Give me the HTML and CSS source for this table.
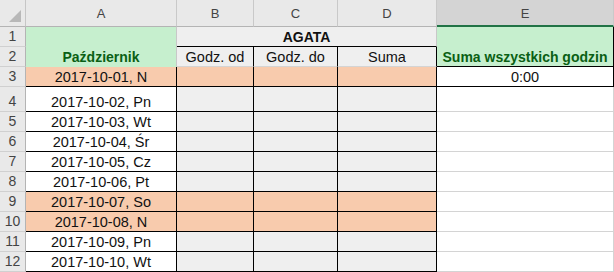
FILE: index.html
```html
<!DOCTYPE html>
<html lang="pl">
<head>
<meta charset="utf-8">
<title>Arkusz</title>
<link rel="stylesheet" href="styles.css">
</head>
<body>
<div class="sheet">
  <div class="corner"><svg class="tri" width="14" height="14" viewBox="0 0 14 14"><polygon points="13,1 13,13 1,13" fill="#b8b8b8"/></svg></div>
  <div class="ch">A</div>
  <div class="ch">B</div>
  <div class="ch">C</div>
  <div class="ch">D</div>
  <div class="ch sel">E</div>

  <div class="rh">1</div>
  <div class="c green month">Październik</div>
  <div class="c grayfill agata">AGATA</div>
  <div class="c green total">Suma wszystkich godzin</div>

  <div class="rh">2</div>
  <div class="c grayfill sub bk-r">Godz. od</div>
  <div class="c grayfill sub bk-r">Godz. do</div>
  <div class="c grayfill sub bk-r">Suma</div>

  <div class="rh">3</div>
  <div class="c bk orange">2017-10-01, N</div>
  <div class="c bk orange"></div>
  <div class="c bk orange"></div>
  <div class="c bk orange"></div>
  <div class="c bk sum">0:00</div>

  <div class="rh tall">4</div>
  <div class="c bk">2017-10-02, Pn</div>
  <div class="c bk grayfill"></div>
  <div class="c bk grayfill"></div>
  <div class="c bk grayfill"></div>
  <div class="c"></div>

  <div class="rh">5</div>
  <div class="c bk">2017-10-03, Wt</div>
  <div class="c bk grayfill"></div>
  <div class="c bk grayfill"></div>
  <div class="c bk grayfill"></div>
  <div class="c"></div>

  <div class="rh">6</div>
  <div class="c bk">2017-10-04, Śr</div>
  <div class="c bk grayfill"></div>
  <div class="c bk grayfill"></div>
  <div class="c bk grayfill"></div>
  <div class="c"></div>

  <div class="rh">7</div>
  <div class="c bk">2017-10-05, Cz</div>
  <div class="c bk grayfill"></div>
  <div class="c bk grayfill"></div>
  <div class="c bk grayfill"></div>
  <div class="c"></div>

  <div class="rh">8</div>
  <div class="c bk">2017-10-06, Pt</div>
  <div class="c bk grayfill"></div>
  <div class="c bk grayfill"></div>
  <div class="c bk grayfill"></div>
  <div class="c"></div>

  <div class="rh">9</div>
  <div class="c bk orange">2017-10-07, So</div>
  <div class="c bk orange"></div>
  <div class="c bk orange"></div>
  <div class="c bk orange"></div>
  <div class="c"></div>

  <div class="rh">10</div>
  <div class="c bk orange">2017-10-08, N</div>
  <div class="c bk orange"></div>
  <div class="c bk orange"></div>
  <div class="c bk orange"></div>
  <div class="c"></div>

  <div class="rh">11</div>
  <div class="c bk">2017-10-09, Pn</div>
  <div class="c bk grayfill"></div>
  <div class="c bk grayfill"></div>
  <div class="c bk grayfill"></div>
  <div class="c"></div>

  <div class="rh">12</div>
  <div class="c bk">2017-10-10, Wt</div>
  <div class="c bk grayfill"></div>
  <div class="c bk grayfill"></div>
  <div class="c bk grayfill"></div>
  <div class="c"></div>
</div>
</body>
</html>
```

FILE: styles.css
```css
html, body {
  margin: 0;
  padding: 0;
  background: #ffffff;
  overflow: hidden;
}

.sheet {
  display: grid;
  grid-template-columns: 26px 151px 77px 84px 99px 177px;
  grid-template-rows: 27px 20px 20px 20px 25px repeat(8, 20px);
  width: 614px;
  height: 272px;
  font-family: "Liberation Sans", Arial, sans-serif;
}

.sheet > div {
  box-sizing: border-box;
  overflow: hidden;
  white-space: nowrap;
}

.corner {
  background: #e9e9e9;
  border-right: 1px solid #c6c6c6;
  border-bottom: 1px solid #b4b4b4;
  display: flex;
  align-items: flex-end;
  justify-content: flex-end;
  padding: 0 3px 3px 0;
}

.tri {
  display: block;
}

.ch {
  background: #e9e9e9;
  border-right: 1px solid #c9c9c9;
  border-bottom: 1px solid #b4b4b4;
  color: #444444;
  font-size: 13px;
  display: flex;
  align-items: center;
  justify-content: center;
  padding-top: 1px;
}

.ch.sel {
  background: #d4d4d4;
  border-bottom: 2px solid #217346;
  color: #444444;
}

.rh {
  background: #e9e9e9;
  border-right: 1px solid #b4b4b4;
  border-bottom: 1px solid #d0d0d0;
  color: #444444;
  font-size: 14px;
  display: flex;
  align-items: flex-end;
  justify-content: center;
  line-height: 18px;
  padding-bottom: 1px;
}

.c {
  border-right: 1px solid #d4d4d4;
  border-bottom: 1px solid #d4d4d4;
  display: flex;
  align-items: flex-end;
  justify-content: center;
  font-size: 14.5px;
  line-height: 18px;
  color: #111111;
  background: #ffffff;
}

.c.bk {
  border-right-color: #000000;
  border-bottom-color: #000000;
}

.c.bk-r {
  border-right-color: #000000;
}

.grayfill {
  background: #efefef;
}

.c.orange {
  background: #f8cbad;
}

.green {
  background: #c6efce;
  color: #0a5f14;
  font-weight: bold;
}

.c.month {
  font-size: 14px;
  grid-row: span 2;
  border-right-color: #c8c8c8;
  border-bottom-color: #c6efce;
}

.c.agata {
  font-size: 14px;
  grid-column: span 3;
  font-weight: bold;
  border-bottom-color: #000000;
  border-right-color: #c8c8c8;
}

.c.total {
  font-size: 14px;
  grid-row: span 2;
  border-right-color: #000000;
  border-bottom-color: #000000;
}

.sub {
  border-bottom-color: #d4d4d4;
}

.sum {
  background: #ffffff;
}
```
